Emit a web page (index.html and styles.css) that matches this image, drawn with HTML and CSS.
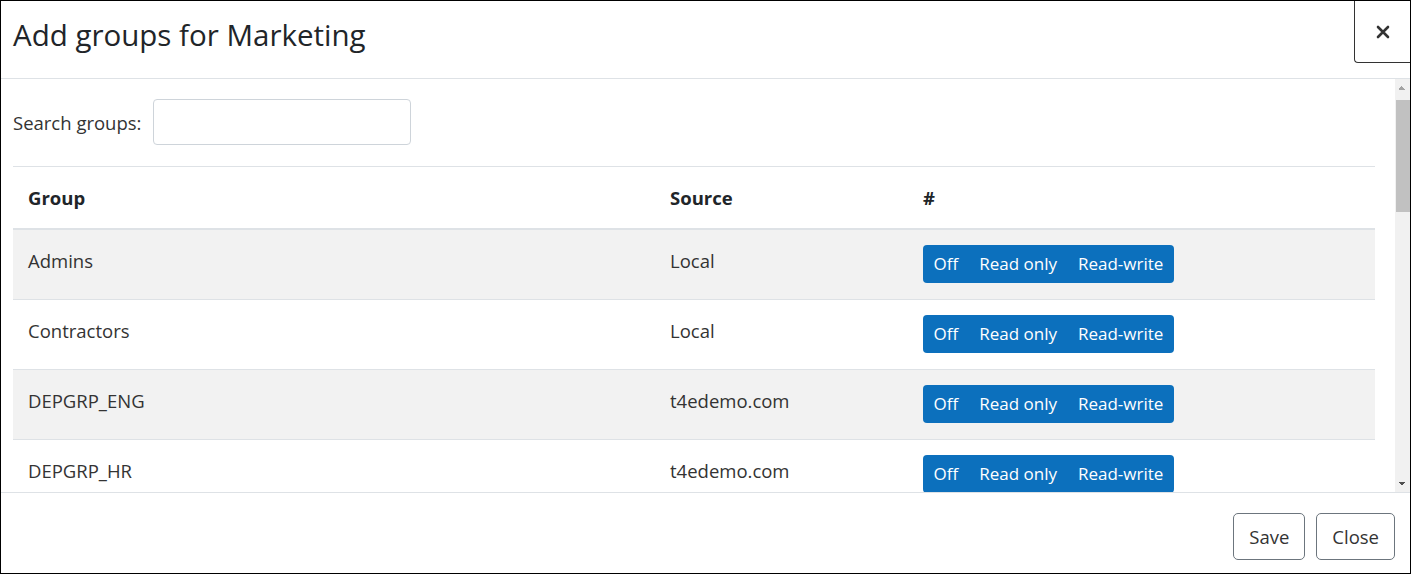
FILE: index.html
```html
<!DOCTYPE html>
<html lang="en">
<head>
<meta charset="UTF-8">
<title>Add groups for Marketing</title>
<link rel="stylesheet" href="styles.css">
</head>
<body>

<div class="modal">
  <div class="modal-header">
    <h4 class="modal-title">Add groups for Marketing</h4>
    <button class="btn-close" type="button" aria-label="Close">
      <svg width="14" height="14" viewBox="0 0 14 14"><path d="M2 2L12 12M12 2L2 12" stroke="#333" stroke-width="2.6" stroke-linecap="round"/></svg>
    </button>
  </div>

  <div class="modal-main">
    <div class="modal-body">
      <div class="search-row">
        <label for="search">Search groups:</label>
        <input id="search" type="text">
      </div>

      <table class="groups">
        <colgroup>
          <col class="col-group">
          <col class="col-source">
          <col>
        </colgroup>
        <thead>
          <tr><th>Group</th><th>Source</th><th>#</th></tr>
        </thead>
        <tbody id="rows"></tbody>
      </table>
    </div>

    <!-- scrollbar of the body -->
    <div class="scrollbar">
      <div class="sb-btn sb-up"></div>
      <div class="sb-track"><div class="sb-thumb"></div></div>
      <div class="sb-btn sb-down"></div>
    </div>
  </div>

  <div class="modal-footer">
    <button class="btn" type="button">Save</button>
    <button class="btn" type="button">Close</button>
  </div>
</div>

<script>
  const groups = [
    ['Admins', 'Local'],
    ['Contractors', 'Local'],
    ['DEPGRP_ENG', 't4edemo.com'],
    ['DEPGRP_HR', 't4edemo.com']
  ];

  const tbody = document.getElementById('rows');
  groups.forEach(g => {
    const tr = document.createElement('tr');
    tr.innerHTML =
      '<td>' + g[0] + '</td>' +
      '<td>' + g[1] + '</td>' +
      '<td class="actions"><div class="btn-group">' +
        '<button type="button">Off</button>' +
        '<button type="button">Read only</button>' +
        '<button type="button">Read-write</button>' +
      '</div></td>';
    tbody.appendChild(tr);
  });
</script>

</body>
</html>
```

FILE: styles.css
```css
html, body {
  margin: 0;
  height: 100%;
}
body {
  font-family: "Open Sans", "Noto Sans", sans-serif;
  color: #212529;
  background: #fff;
}
.modal {
  box-sizing: border-box;
  width: 1411px;
  height: 574px;
  border: 1px solid #000;
  display: flex;
  flex-direction: column;
  background: #fff;
}
.modal-header {
  flex: none;
  box-sizing: border-box;
  height: 78px;
  display: flex;
  justify-content: space-between;
  align-items: flex-start;
  padding-left: 12px;
  border-bottom: 1px solid #dee2e6;
}
.modal-title {
  margin: 0;
  padding-top: 14px;
  font-size: 29.5px;
  line-height: 40px;
  font-weight: 500;
  color: #212529;
}
.btn-close {
  box-sizing: border-box;
  width: 56px;
  height: 62px;
  padding: 0;
  background: #fff;
  border: none;
  border-left: 1px solid #333;
  border-bottom: 1px solid #333;
  border-bottom-left-radius: 4px;
  display: flex;
  align-items: center;
  justify-content: center;
  cursor: pointer;
}
.modal-main {
  flex: 1;
  min-height: 0;
  display: flex;
}
.modal-body {
  flex: 1;
  overflow: hidden;
  padding: 20px 20px 0 12px;
}
.scrollbar {
  flex: none;
  width: 15px;
  display: flex;
  flex-direction: column;
  background: #f1f1f1;
}
.sb-btn {
  height: 17px;
  background-repeat: no-repeat;
  background-size: 4px 4px;
  background-position: 3px 7px, 7px 7px;
}
.sb-up {
  background-image:
    linear-gradient(to top left, #a3a3a3 50%, transparent 50%),
    linear-gradient(to top right, #a3a3a3 50%, transparent 50%);
}
.sb-down {
  background-image:
    linear-gradient(to bottom left, #505050 50%, transparent 50%),
    linear-gradient(to bottom right, #505050 50%, transparent 50%);
}
.sb-track {
  flex: 1;
  padding-top: 4px;
}
.sb-thumb {
  height: 112px;
  margin-left: 1px;
  background: #c1c1c1;
}
.search-row {
  display: flex;
  align-items: center;
  gap: 12px;
  margin-bottom: 21px;
}
.search-row label {
  font-size: 18.5px;
  color: #333;
}
.search-row input {
  box-sizing: border-box;
  width: 258px;
  height: 46px;
  border: 1px solid #ced4da;
  border-radius: 4px;
  font-size: 17px;
  padding: 0 10px;
}
.groups {
  width: 100%;
  border-collapse: collapse;
  border-top: 1px solid #dee2e6;
  font-size: 18.5px;
  line-height: 27px;
}
.col-group {
  width: 642px;
}
.col-source {
  width: 253px;
}
.groups th {
  text-align: left;
  font-weight: 700;
  padding: 17px 15px 17px;
  border-bottom: 2px solid #dee2e6;
  color: #212529;
}
.groups td {
  padding: 17px 15px 25px;
  vertical-align: top;
  border-bottom: 1px solid #dee2e6;
  color: #333;
}
.groups td.actions {
  padding: 15px 15px 16px;
}
.groups tbody tr:nth-child(odd) {
  background: #f2f2f2;
}
.btn-group {
  display: inline-flex;
  height: 38px;
  background: #0c70bd;
  border-radius: 4px;
}
.btn-group button {
  background: none;
  border: none;
  color: #fff;
  font-family: inherit;
  font-size: 17px;
  line-height: 38px;
  padding: 0 10.5px;
  cursor: pointer;
}
.modal-footer {
  flex: none;
  box-sizing: border-box;
  height: 81px;
  display: flex;
  justify-content: flex-end;
  align-items: flex-start;
  gap: 11px;
  padding: 20px 15px 0 0;
  border-top: 1px solid #dee2e6;
}
.btn {
  height: 47px;
  padding: 0 15px;
  background: #fff;
  border: 1px solid #6c757d;
  border-radius: 5px;
  color: #333;
  font-family: inherit;
  font-size: 18.5px;
  cursor: pointer;
}
```
